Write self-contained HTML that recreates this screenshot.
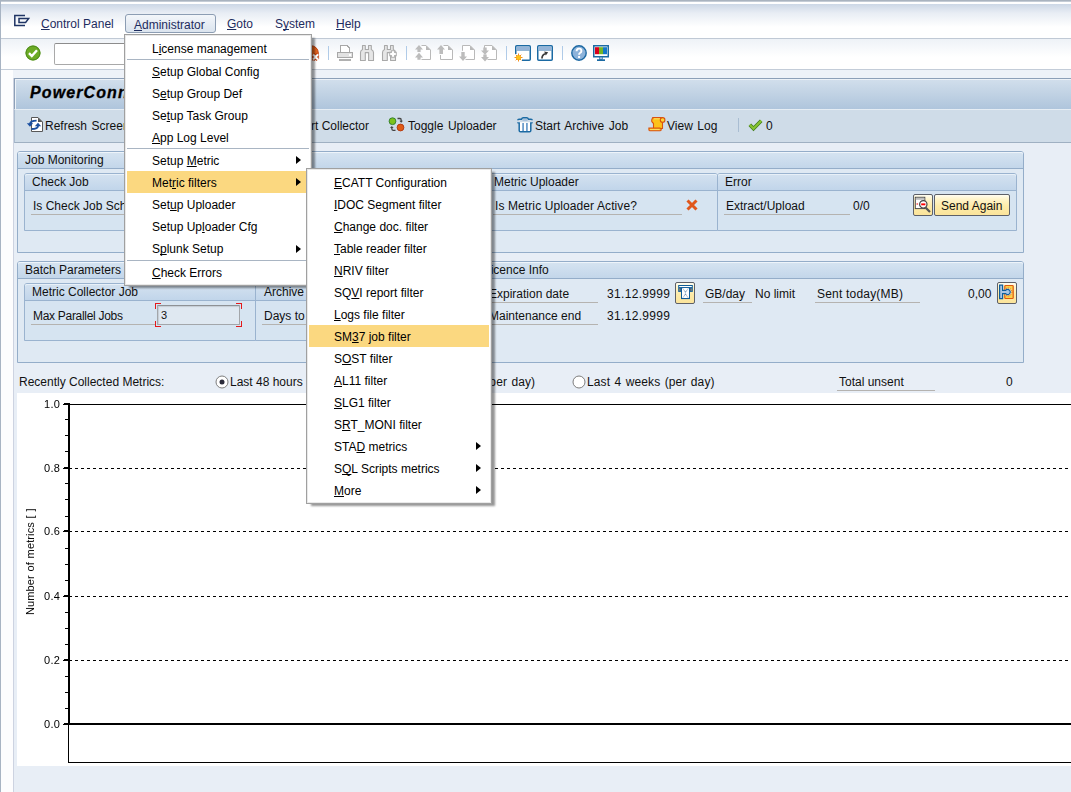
<!DOCTYPE html>
<html><head><meta charset="utf-8">
<style>
*{box-sizing:border-box;margin:0;padding:0}
html,body{width:1071px;height:792px;overflow:hidden}
body{position:relative;background:#e8eef6;font-family:"Liberation Sans",sans-serif;font-size:12px;color:#000}
.a{position:absolute}
.t{position:absolute;white-space:pre;line-height:14px;color:#111}
u{text-decoration:underline;text-underline-offset:1px;text-decoration-thickness:1px;text-decoration-skip-ink:none}
svg{position:absolute;overflow:visible}
/* frame */
#topline{left:0;top:0;width:1071px;height:1px;background:#a9b3bf}
#menubar{left:1px;top:1px;width:1070px;height:37px;background:linear-gradient(#c4ccd6 0,#c4ccd6 1px,#ffffff 1px,#ffffff 3px,#ccd7e6 3px,#e8edf4 12px,#ffffff 26px)}
#mbline{left:1px;top:38px;width:1070px;height:1px;background:#c0c9d5}
#toolbar{left:1px;top:39px;width:1070px;height:30px;background:linear-gradient(#eef2f7,#ffffff 60%)}
#tbline{left:1px;top:69px;width:1070px;height:1px;background:#c3ccd8}
#strip{left:1px;top:70px;width:1070px;height:8px;background:#eef2f8}
#leftline{left:0;top:0;width:1px;height:792px;background:#a8b4c3}
#leftstrip{left:1px;top:70px;width:12px;height:722px;background:#fdfdfe}
#panel{left:13px;top:78px;width:1058px;height:714px;background:#e8eef6;border-left:1px solid #cdd3e1}
#title{left:14px;top:78px;width:1057px;height:31px;border-top:1px solid #8da0b8;border-left:1px solid #8da0b8;background:linear-gradient(#d2dfec,#afc5dc);box-shadow:inset 1px 1px 0 #edf2f8}
#apptb{left:14px;top:109px;width:1057px;height:34px;background:#cfdce8;border-top:1px solid #e6edf4;border-bottom:1px solid #9fb0c2;border-left:1px solid #a9bbcf}
.menutxt{color:#1e2c5e}
/* group boxes */
.gb{position:absolute;border:1px solid #94adc9;border-radius:3px 3px 0 0;background:#dfe9f3}
.gb>.h{position:absolute;left:0;top:0;right:0;height:17px;border-bottom:1px solid #94adc9;border-radius:2px 2px 0 0;background:linear-gradient(#d6e4f1,#c3d6ea);box-shadow:inset 0 1px 0 #eef4fa}
.ib{position:absolute;border:1px solid #9ab3cf;border-radius:3px 3px 0 0;background:#d6e4f1}
.ib>.h{position:absolute;left:0;top:0;right:0;height:17px;border-bottom:1px solid #9ab3cf;border-radius:2px 2px 0 0;background:linear-gradient(#d4e2f0,#c1d5ea);box-shadow:inset 0 1px 0 #e8f0f8}
.ul{position:absolute;height:1px;background:#b5b3b0}
.btn{position:absolute;border:1px solid #5d6068;border-radius:2px;background:linear-gradient(#fffdf2 0,#fff5cc 20%,#fdeba9 55%,#fbe49b 100%)}
/* menus */
.menu{position:absolute;background:#fff;border:1px solid #a0a0a0;box-shadow:inset 0 0 0 1px #e9e9e9,4px 3px 2px -1px rgba(0,0,0,.42)}
.mi{position:absolute;white-space:pre;line-height:14px;color:#000}
.sep{position:absolute;height:1px;background:#a9b5c3}
.hl{position:absolute;background:#fbd880;height:22px}
.arr{position:absolute;width:0;height:0;border-top:4.5px solid transparent;border-bottom:4.5px solid transparent;border-left:5px solid #000}
</style></head><body>
<div class="a" id="topline"></div>
<div class="a" id="menubar"></div>
<div class="a" id="mbline"></div>
<div class="a" id="toolbar"></div>
<div class="a" id="tbline"></div>
<div class="a" id="strip"></div>
<div class="a" id="leftstrip"></div>
<div class="a" id="panel"></div>
<div class="a" id="title"></div>
<div class="a" id="apptb"></div>
<div class="a" id="leftline"></div>

<!-- menubar items -->
<svg style="left:13px;top:14px" width="17" height="13" viewBox="0 0 17 13"><path d="M12 1.6H1.8V11.4H12M6 4.6H15.6L12.6 8.4H6Z" fill="none" stroke="#1f3464" stroke-width="1.5"/></svg>
<div class="t menutxt" style="left:41px;top:17px"><u>C</u>ontrol Panel</div>
<div class="a" style="left:125px;top:14px;width:91px;height:19px;border:1px solid #8c9db3;border-radius:3px;background:linear-gradient(#f3f6fa,#dbe4ee)"></div>
<div class="t menutxt" style="left:134px;top:18px"><u>A</u>dministrator</div>
<div class="t menutxt" style="left:227px;top:17px"><u>G</u>oto</div>
<div class="t menutxt" style="left:275px;top:17px">S<u>y</u>stem</div>
<div class="t menutxt" style="left:336px;top:17px"><u>H</u>elp</div>

<!-- system toolbar -->
<svg style="left:25px;top:45px" width="16" height="16" viewBox="0 0 16 16"><circle cx="8" cy="8" r="7.5" fill="#6cab25"/><circle cx="8" cy="8" r="7" fill="none" stroke="#4d8a1c" stroke-width="1"/><path d="M4 8.2L6.8 11L12 5.2" fill="none" stroke="#fff" stroke-width="2.4"/></svg>
<div class="a" style="left:54px;top:43px;width:246px;height:22px;border:1px solid #a9a9a9;border-top-color:#8c8c8c;border-radius:2px;background:#fff"></div>
<svg style="left:303px;top:45px" width="17" height="17" viewBox="0 0 17 17"><circle cx="8" cy="8" r="7.3" fill="#e2641e" stroke="#c0400f" stroke-width="1"/><path d="M10 9.5L15 14.5M15 9.5L10 14.5" stroke="#c0400f" stroke-width="4"/><path d="M10 9.5L15 14.5M15 9.5L10 14.5" stroke="#fff" stroke-width="2"/></svg>
<div class="a" style="left:328px;top:46px;width:1px;height:14px;background:#b0cbe8"></div>
<svg style="left:337px;top:45px" width="16" height="16" viewBox="0 0 16 16" shape-rendering="crispEdges"><path d="M3.5 7V0.5H10L12.5 3V7" fill="#fff" stroke="#a8a8a8"/><rect x="0.5" y="7.5" width="15" height="5" rx="1" fill="#e2e2e2" stroke="#a8a8a8"/><rect x="12" y="9" width="2" height="2" fill="#fff"/><rect x="2" y="14" width="12" height="1.5" fill="#b0b0b0"/></svg>
<svg style="left:360px;top:45px" width="15" height="16" viewBox="0 0 15 16"><path d="M2.5 0.5H5.3V4.5H8.5V0.5H11.3V4.5Q13.5 5.5 13.5 7.5V15.5H8.6V7.6H5.3V15.5H0.5V7.5Q0.5 5.5 2.5 4.5Z" fill="#e6e6e6" stroke="#a9a9a9" stroke-width="1.1" stroke-linejoin="round"/></svg>
<svg style="left:382px;top:45px" width="17" height="16" viewBox="0 0 17 16"><path d="M2.5 0.5H5.3V4.5H8.5V0.5H11.3V4.5Q13.5 5.5 13.5 7.5V15.5H8.6V7.6H5.3V15.5H0.5V7.5Q0.5 5.5 2.5 4.5Z" fill="#e6e6e6" stroke="#a9a9a9" stroke-width="1.1" stroke-linejoin="round"/><path d="M11 5.2V12.8M7.2 9H14.8" stroke="#b0b0b0" stroke-width="4.4"/><path d="M11 6.2V11.8M8.2 9H13.8" stroke="#fff" stroke-width="2.2"/></svg>
<div class="a" style="left:406px;top:46px;width:1px;height:14px;background:#b0cbe8"></div>
<svg style="left:415px;top:45px" width="17" height="16" viewBox="0 0 17 16"><path d="M6.5 0.5H11L15.5 5V14.5H6.5" fill="#fff" stroke="#b9b9b9"/><path d="M11 0.5L15.5 5H11Z" fill="#b9b9b9"/><path d="M4 0L8 4.6H5.6V7H2.4V4.6H0Z M4 7.8L8 12.4H5.6V14.7H2.4V12.4H0Z" fill="#bcbcbc"/></svg>
<svg style="left:437px;top:45px" width="17" height="16" viewBox="0 0 17 16"><path d="M6.5 0.5H11L15.5 5V14.5H3.5V10" fill="#fff" stroke="#b9b9b9"/><path d="M11 0.5L15.5 5H11Z" fill="#b9b9b9"/><path d="M4 0L8 4.6H6V9H2.4V4.6H0Z" fill="#bcbcbc"/></svg>
<svg style="left:459px;top:45px" width="17" height="17" viewBox="0 0 17 17"><path d="M3.5 5.8V0.5H11L15.5 5V14.5H6.5" fill="#fff" stroke="#b9b9b9"/><path d="M11 0.5L15.5 5H11Z" fill="#b9b9b9"/><path d="M4 16L8 11.5H5.7V7H2.3V11.5H0Z" fill="#bcbcbc"/></svg>
<svg style="left:481px;top:45px" width="17" height="17" viewBox="0 0 17 17"><path d="M3.5 3V0.5H11L15.5 5V14.5H6.5" fill="#fff" stroke="#b9b9b9"/><path d="M11 0.5L15.5 5H11Z" fill="#b9b9b9"/><path d="M4 9.8L8 5.4H5.7V2.5H2.3V5.4H0Z M4 16.5L8 12.1H5.7V9.6H2.3V12.1H0Z" fill="#bcbcbc"/></svg>
<div class="a" style="left:506px;top:46px;width:1px;height:14px;background:#b0cbe8"></div>
<svg style="left:515px;top:45px" width="16" height="16" viewBox="0 0 16 16"><rect x="0.75" y="0.75" width="14.5" height="14.5" rx="1" fill="#fff" stroke="#1b6aa3" stroke-width="1.5"/><rect x="1.5" y="1.5" width="13" height="3.5" fill="#94b4d8"/><rect x="1.5" y="5" width="13" height="0.6" fill="#4f86b8"/><rect x="0" y="9" width="7" height="7" fill="#fff"/><circle cx="3.5" cy="12.5" r="2.6" fill="#f7b218"/><path d="M3.5 8.5V16.5M-0.5 12.5H7.5M0.7 9.7L6.3 15.3M6.3 9.7L0.7 15.3" stroke="#f58f1a" stroke-width="1"/><circle cx="3.5" cy="12.5" r="2" fill="#fcc419"/></svg>
<svg style="left:537px;top:45px" width="16" height="16" viewBox="0 0 16 16"><rect x="0.75" y="0.75" width="14.5" height="14.5" rx="1" fill="#fff" stroke="#1b6aa3" stroke-width="1.5"/><rect x="1.5" y="1.5" width="13" height="3.5" fill="#94b4d8"/><rect x="1.5" y="5" width="13" height="0.6" fill="#4f86b8"/><path d="M5 13.5Q4.8 10 8.5 8.8" fill="none" stroke="#3a3a3a" stroke-width="1.7"/><path d="M7.2 6.6L11.2 7.2L8.8 10.6Z" fill="#3a3a3a"/></svg>
<div class="a" style="left:562px;top:46px;width:1px;height:14px;background:#b0cbe8"></div>
<svg style="left:571px;top:45px" width="16" height="16" viewBox="0 0 16 16"><circle cx="8" cy="8" r="7.2" fill="#8db3da" stroke="#1d69a3" stroke-width="1.4"/><path d="M5.6 6.2Q5.6 3.6 8 3.6Q10.4 3.6 10.4 5.9Q10.4 7.2 9 8Q8.1 8.5 8.1 9.8" fill="none" stroke="#fff" stroke-width="1.9"/><rect x="7.1" y="11" width="2" height="2" fill="#fff"/></svg>
<svg style="left:593px;top:45px" width="16" height="16" viewBox="0 0 16 16"><rect x="0.75" y="0.75" width="14.5" height="11" fill="#fff" stroke="#1b6aa3" stroke-width="1.5"/><rect x="2" y="2.2" width="4" height="7" fill="#d9001b"/><rect x="6" y="2.2" width="4" height="7" fill="#73b626"/><rect x="10" y="2.2" width="4" height="7" fill="#1478c8"/><rect x="6.6" y="12" width="2.8" height="2.5" fill="#9fc0e0" stroke="#1b6aa3" stroke-width="0.6"/><rect x="4" y="14.3" width="8" height="1.7" fill="#1b6aa3"/></svg>

<!-- title -->
<div class="t" style="left:30px;top:84px;font-size:16px;font-weight:bold;font-style:italic;line-height:18px;color:#000;letter-spacing:1.1px;-webkit-text-stroke:0.3px #000">PowerConnect</div>

<!-- app toolbar -->
<svg style="left:27px;top:117px" width="17" height="16" viewBox="0 0 17 16"><path d="M4.5 0.5H11L15.5 5V14.5H4.5Z" fill="#fff" stroke="#585858" stroke-width="1"/><path d="M11 0.5L15.5 5H11Z" fill="#585858"/><path d="M3 7Q3.2 3.6 9.6 3.6" fill="none" stroke="#1a4fa0" stroke-width="1.9"/><path d="M-0.2 6.2H6.2L3 9.8Z" fill="#1a4fa0"/><path d="M11 9Q10.8 12 4.5 12" fill="none" stroke="#1a4fa0" stroke-width="1.9"/><path d="M7.8 9.2H14.2L11 5.8Z" fill="#1a4fa0"/></svg>
<div class="t" style="left:45px;top:119px;word-spacing:1.2px">Refresh Screen</div>
<div class="t" style="left:293px;top:119px">Start Collector</div>
<svg style="left:388px;top:117px" width="17" height="15" viewBox="0 0 17 15"><circle cx="4.5" cy="4.2" r="3.4" fill="#7cc21d" stroke="#2f7a2f" stroke-width="0.9"/><circle cx="12.5" cy="10.5" r="3.4" fill="#e05a14" stroke="#b0360f" stroke-width="0.9"/><path d="M9.5 1.5H12Q13.2 1.5 13.2 3.2V4.5" fill="none" stroke="#444" stroke-width="1.3"/><path d="M11.4 3.8L13.2 5.8L15 3.8Z" fill="#444"/><path d="M7.5 13.3H5Q3.8 13.3 3.8 11.6V10.3" fill="none" stroke="#444" stroke-width="1.3"/><path d="M2 11L3.8 9L5.6 11Z" fill="#444"/></svg>
<div class="t" style="left:408px;top:119px;word-spacing:1.2px">Toggle Uploader</div>
<svg style="left:517px;top:117px" width="16" height="16" viewBox="0 0 16 16"><path d="M0.8 3.2Q0.8 2.2 2 2.2H4.5Q5 0.8 6.3 0.8H9.7Q11 0.8 11.5 2.2H14Q15.2 2.2 15.2 3.2" fill="none" stroke="#1b6aa3" stroke-width="1.5"/><path d="M5.5 2.5H10.5V3.5H5.5Z" fill="#7fa9d2"/><path d="M0.8 5.2Q0.8 6 2.2 6V13.5Q2.2 14.8 3.5 14.8H12.5Q13.8 14.8 13.8 13.5V6Q15.2 6 15.2 5.2" fill="#fff" stroke="#1b6aa3" stroke-width="1.5"/><rect x="5.2" y="6" width="1.8" height="8" fill="#6f9fcc"/><rect x="9" y="6" width="1.8" height="8" fill="#6f9fcc"/></svg>
<div class="t" style="left:535px;top:119px;word-spacing:1.2px">Start Archive Job</div>
<svg style="left:648px;top:117px" width="18" height="15" viewBox="0 0 18 15"><path d="M4.6 0.6H14.5V11.5H5.5V6.5L4.2 5.2Q3.4 4 3.8 2.8Z" fill="#fcc21b" stroke="#d9520f" stroke-width="1.1" stroke-linejoin="round"/><path d="M6 1.8H13" stroke="#fde36a" stroke-width="1"/><circle cx="14.6" cy="2.9" r="2.3" fill="#fdd835" stroke="#d9520f" stroke-width="1.1"/><path d="M0.9 11.1H11.8Q13.2 11.1 13.2 12.4Q13.2 13.8 11.8 13.8H2.2Q0.9 13.8 0.9 12.4Z" fill="#fcc21b" stroke="#d9520f" stroke-width="1.1"/><path d="M2 12.4H11.5" stroke="#fde36a" stroke-width="0.9"/></svg>
<div class="t" style="left:667px;top:119px;word-spacing:1.2px">View Log</div>
<div class="a" style="left:738px;top:118px;width:1px;height:14px;background:#a9bdd2"></div>
<svg style="left:748px;top:119px" width="15" height="12" viewBox="0 0 15 12"><path d="M1.8 5.8L5.5 9.6L13.2 1.8" fill="none" stroke="#3f7a1a" stroke-width="3.6"/><path d="M1.8 5.8L5.5 9.6L13.2 1.8" fill="none" stroke="#86c232" stroke-width="2.2"/></svg>
<div class="t" style="left:766px;top:119px">0</div>

<!-- Job Monitoring -->
<div class="gb" style="left:17px;top:151px;width:1007px;height:102px"><div class="h"></div></div>
<div class="t" style="left:25px;top:153px">Job Monitoring</div>
<div class="ib" style="left:24px;top:173px;width:463px;height:58px"><div class="h"></div></div>
<div class="ib" style="left:486px;top:173px;width:232px;height:58px"><div class="h"></div></div>
<div class="ib" style="left:717px;top:173px;width:300px;height:58px"><div class="h"></div></div>
<div class="t" style="left:32px;top:175px">Check Job</div>
<div class="t" style="left:494px;top:175px">Metric Uploader</div>
<div class="t" style="left:725px;top:175px">Error</div>
<div class="t" style="left:33px;top:199px">Is Check Job Scheduled?</div>
<div class="ul" style="left:31px;top:214px;width:250px"></div>
<div class="t" style="left:495px;top:199px;letter-spacing:0.1px">Is Metric Uploader Active?</div>
<div class="ul" style="left:493px;top:214px;width:189px"></div>
<div class="t" style="left:726px;top:199px">Extract/Upload</div>
<div class="ul" style="left:724px;top:214px;width:126px"></div>
<div class="t" style="left:853px;top:199px">0/0</div>
<div class="btn" style="left:913px;top:194px;width:20px;height:22px"></div>
<svg style="left:913px;top:194px" width="20" height="22" viewBox="0 0 20 22"><rect x="2.3" y="3.3" width="9.5" height="11.3" fill="#fff" stroke="#4a4a4a" stroke-width="1"/><rect x="2.8" y="3.8" width="8.5" height="2" fill="#bdbdbd"/><rect x="3.5" y="9.5" width="1.6" height="1" fill="#e00"/><path d="M12.5 13.5L17 18" stroke="#555" stroke-width="2.2"/><circle cx="10.3" cy="10.3" r="3.7" fill="#fff" stroke="#444" stroke-width="1.2"/><rect x="8.2" y="9.4" width="4.2" height="1.9" fill="#f00"/></svg>
<div class="btn" style="left:934px;top:194px;width:76px;height:22px"></div>
<div class="t" style="left:941px;top:199px">Send Again</div>

<!-- Batch Parameters -->
<div class="gb" style="left:17px;top:261px;width:460px;height:102px"><div class="h"></div></div>
<div class="gb" style="left:476px;top:261px;width:548px;height:102px"><div class="h"></div></div>
<div class="t" style="left:25px;top:263px">Batch Parameters</div>
<div class="t" style="left:484px;top:263px">Licence Info</div>
<div class="ib" style="left:24px;top:283px;width:232px;height:58px"><div class="h"></div></div>
<div class="ib" style="left:255px;top:283px;width:215px;height:58px"><div class="h"></div></div>
<div class="t" style="left:32px;top:285px">Metric Collector Job</div>
<div class="t" style="left:264px;top:285px">Archive Job</div>
<div class="t" style="left:33px;top:309px;letter-spacing:-0.3px">Max Parallel Jobs</div>
<div class="ul" style="left:31px;top:324px;width:125px"></div>
<div class="t" style="left:264px;top:309px">Days to keep</div>
<div class="ul" style="left:262px;top:324px;width:120px"></div>
<div class="a" style="left:157px;top:305px;width:83px;height:20px;border:1px solid #a3a6aa;border-top-color:#8e9195;border-radius:1px;background:#dfe8f1;box-shadow:inset 1px 1px 1px rgba(0,0,0,.12)"></div>
<svg style="left:155px;top:303px" width="88" height="24" shape-rendering="crispEdges"><path d="M0 0h6v1h-5v5h-1z M81 0h6v6h-1v-5h-5z M0 18h1v5h5v1h-6z M86 18h1v6h-6v-1h5z" fill="#e3191b"/></svg>
<div class="t" style="left:161px;top:308px;font-size:11px">3</div>
<svg style="left:686px;top:199px" width="12" height="12" viewBox="0 0 12 12"><path d="M1.5 1.5L10.5 10.5M10.5 1.5L1.5 10.5" stroke="#e0561b" stroke-width="3"/></svg>
<div class="t" style="left:489px;top:287px">Expiration date</div>
<div class="ul" style="left:487px;top:302px;width:111px"></div>
<div class="t" style="left:607px;top:287px;letter-spacing:0.33px">31.12.9999</div>
<div class="btn" style="left:675px;top:282px;width:20px;height:22px"></div>
<svg style="left:675px;top:282px" width="20" height="22" viewBox="0 0 20 22"><rect x="3.2" y="3" width="14.6" height="6.9" fill="#0f5c98"/><rect x="4.2" y="4" width="12.6" height="1.1" fill="#fff"/><rect x="4.2" y="6.4" width="1.2" height="2.4" fill="#a08672"/><rect x="15.6" y="6.4" width="1.2" height="2.4" fill="#a08672"/><rect x="6" y="5.5" width="9" height="11.6" fill="#0f5c98"/><rect x="7" y="6" width="7" height="10" fill="#fff"/><path d="M7.8 6.5L10.4 10V12.2L8 15.5M13.2 6.5L10.6 10M10.6 12.2L13 15.5" fill="none" stroke="#2b5f8f" stroke-width="0.7" stroke-dasharray="1 0.6"/></svg>
<div class="t" style="left:705px;top:287px">GB/day</div>
<div class="ul" style="left:703px;top:302px;width:49px"></div>
<div class="t" style="left:755px;top:287px">No limit</div>
<div class="t" style="left:817px;top:287px;letter-spacing:0.2px">Sent today(MB)</div>
<div class="ul" style="left:815px;top:302px;width:105px"></div>
<div class="t" style="left:968px;top:287px">0,00</div>
<div class="btn" style="left:997px;top:282px;width:20px;height:22px"></div>
<svg style="left:997px;top:282px" width="20" height="22" viewBox="0 0 20 22"><rect x="7.8" y="3.5" width="8.4" height="13" rx="0.8" fill="#fbd24a" stroke="#de5a12" stroke-width="1.2"/><circle cx="11" cy="10" r="3.9" fill="#fff1b8" stroke="#de5a12" stroke-width="1" stroke-dasharray="1.3 0.9"/><path d="M2.6 3.2H5.6V8.4H8.6A2.6 2.6 0 1 1 8.6 11.6H5.6V16.6H2.6Z" fill="#a9c6e4" stroke="#0f5f9e" stroke-width="1.2"/></svg>
<div class="t" style="left:489px;top:309px">Maintenance end</div>
<div class="ul" style="left:487px;top:324px;width:111px"></div>
<div class="t" style="left:607px;top:309px;letter-spacing:0.33px">31.12.9999</div>

<!-- radio row -->
<div class="t" style="left:19px;top:375px">Recently Collected Metrics:</div>
<div class="t" style="left:230px;top:375px">Last 48 hours</div>
<div class="t" style="left:407.6px;top:375px;word-spacing:1px;letter-spacing:0.1px">Last 2 weeks (per day)</div>
<div class="t" style="left:587px;top:375px;word-spacing:1px;letter-spacing:0.1px">Last 4 weeks (per day)</div>
<div class="t" style="left:839px;top:375px">Total unsent</div>
<div class="ul" style="left:837px;top:390px;width:98px"></div>
<div class="t" style="left:1006px;top:375px">0</div>
<svg style="left:214.5px;top:375px" width="14" height="14" viewBox="0 0 14 14"><circle cx="7" cy="7" r="6" fill="#fff" stroke="#7d7d7d" stroke-width="1"/><circle cx="7" cy="7" r="2.5" fill="#2a2a3a"/></svg>
<svg style="left:398px;top:375px" width="14" height="14" viewBox="0 0 14 14"><circle cx="7" cy="7" r="6" fill="#fff" stroke="#7d7d7d" stroke-width="1"/></svg>
<svg style="left:571.5px;top:375px" width="14" height="14" viewBox="0 0 14 14"><circle cx="7" cy="7" r="6" fill="#fff" stroke="#7d7d7d" stroke-width="1"/></svg>

<!-- chart -->
<div class="a" style="left:17px;top:393px;width:1054px;height:373px;background:#fff"></div>
<svg style="left:0;top:0" width="1071" height="792" shape-rendering="crispEdges">
<rect x="70" y="404" width="1001" height="1" fill="#000"/>
<rect x="68" y="403" width="2" height="322" fill="#000"/>
<rect x="68" y="404" width="1" height="359" fill="#000"/>
<rect x="68" y="762" width="1003" height="1" fill="#000"/>
<rect x="68" y="723" width="1003" height="2" fill="#000"/>
<path d="M64 403h4v2h-4zM63 404h1v1h-1z M64 467h4v2h-4zM63 468h1v1h-1z M64 530h4v2h-4zM63 531h1v1h-1z M64 595h4v2h-4zM63 596h1v1h-1z M64 659h4v2h-4zM63 660h1v1h-1z M64 723h4v2h-4zM63 724h1v1h-1z" fill="#000"/>
<path d="M65 419h3v1h-3z M65 435h3v1h-3z M65 451h3v1h-3z M65 483h3v1h-3z M65 499h3v1h-3z M65 516h3v1h-3z M65 548h3v1h-3z M65 564h3v1h-3z M65 580h3v1h-3z M65 612h3v1h-3z M65 628h3v1h-3z M65 644h3v1h-3z M65 676h3v1h-3z M65 692h3v1h-3z M65 708h3v1h-3z" fill="#000"/>
</svg>
<div class="a" style="left:69px;top:468px;width:1002px;height:1px;background:repeating-linear-gradient(90deg,#000 0 3px,transparent 3px 6px)"></div>
<div class="a" style="left:69px;top:531px;width:1002px;height:1px;background:repeating-linear-gradient(90deg,#000 0 3px,transparent 3px 6px)"></div>
<div class="a" style="left:69px;top:596px;width:1002px;height:1px;background:repeating-linear-gradient(90deg,#000 0 3px,transparent 3px 6px)"></div>
<div class="a" style="left:69px;top:660px;width:1002px;height:1px;background:repeating-linear-gradient(90deg,#000 0 3px,transparent 3px 6px)"></div>
<div class="t" style="left:30px;top:398px;width:30.3px;text-align:right;font-size:11px;line-height:12px;color:#000;will-change:transform;letter-spacing:0.3px">1.0</div>
<div class="t" style="left:30px;top:462px;width:30.3px;text-align:right;font-size:11px;line-height:12px;color:#000;will-change:transform;letter-spacing:0.3px">0.8</div>
<div class="t" style="left:30px;top:525px;width:30.3px;text-align:right;font-size:11px;line-height:12px;color:#000;will-change:transform;letter-spacing:0.3px">0.6</div>
<div class="t" style="left:30px;top:590px;width:30.3px;text-align:right;font-size:11px;line-height:12px;color:#000;will-change:transform;letter-spacing:0.3px">0.4</div>
<div class="t" style="left:30px;top:654px;width:30.3px;text-align:right;font-size:11px;line-height:12px;color:#000;will-change:transform;letter-spacing:0.3px">0.2</div>
<div class="t" style="left:30px;top:718px;width:30.3px;text-align:right;font-size:11px;line-height:12px;color:#000;will-change:transform;letter-spacing:0.3px">0.0</div>
<div class="t" style="left:-22.5px;top:557px;width:104px;text-align:center;font-size:11px;line-height:12px;color:#000;transform:rotate(-90deg);letter-spacing:0.12px;word-spacing:0.5px">Number of metrics [ ]</div>

<!-- menus -->
<div class="menu" style="left:124px;top:34px;width:188px;height:252px"></div>
<div class="sep" style="left:127px;top:59px;width:182px"></div>
<div class="sep" style="left:127px;top:148px;width:182px"></div>
<div class="sep" style="left:127px;top:260px;width:182px"></div>
<div class="hl" style="left:127px;top:171px;width:182px"></div>
<div class="mi" style="left:152px;top:42px">L<u>i</u>cense management</div>
<div class="mi" style="left:152px;top:65px"><u>S</u>etup Global Config</div>
<div class="mi" style="left:152px;top:87px">S<u>e</u>tup Group Def</div>
<div class="mi" style="left:152px;top:109px">Se<u>t</u>up Task Group</div>
<div class="mi" style="left:152px;top:131px"><u>A</u>pp Log Level</div>
<div class="mi" style="left:152px;top:154px">Setup <u>M</u>etric</div>
<div class="arr" style="left:296px;top:156px"></div>
<div class="mi" style="left:152px;top:176px">Met<u>r</u>ic filters</div>
<div class="arr" style="left:296px;top:178px"></div>
<div class="mi" style="left:152px;top:198px">Set<u>u</u>p Uploader</div>
<div class="mi" style="left:152px;top:220px">Setup Up<u>l</u>oader Cfg</div>
<div class="mi" style="left:152px;top:242px">S<u>p</u>lunk Setup</div>
<div class="arr" style="left:296px;top:245px"></div>
<div class="mi" style="left:152px;top:266px"><u>C</u>heck Errors</div>

<div class="menu" style="left:306px;top:168px;width:186px;height:336px"></div>
<div class="hl" style="left:309px;top:325px;width:180px"></div>
<div class="mi" style="left:334px;top:176px"><u>E</u>CATT Configuration</div>
<div class="mi" style="left:334px;top:198px"><u>I</u>DOC Segment filter</div>
<div class="mi" style="left:334px;top:220px"><u>C</u>hange doc. filter</div>
<div class="mi" style="left:334px;top:242px"><u>T</u>able reader filter</div>
<div class="mi" style="left:334px;top:264px"><u>N</u>RIV filter</div>
<div class="mi" style="left:334px;top:286px">SQ<u>V</u>I report filter</div>
<div class="mi" style="left:334px;top:308px"><u>L</u>ogs file filter</div>
<div class="mi" style="left:334px;top:330px">SM<u>3</u>7 job filter</div>
<div class="mi" style="left:334px;top:352px">S<u>O</u>ST filter</div>
<div class="mi" style="left:334px;top:374px"><u>A</u>L11 filter</div>
<div class="mi" style="left:334px;top:396px"><u>S</u>LG1 filter</div>
<div class="mi" style="left:334px;top:418px">S<u>R</u>T_MONI filter</div>
<div class="mi" style="left:334px;top:440px">STA<u>D</u> metrics</div>
<div class="arr" style="left:476px;top:442px"></div>
<div class="mi" style="left:334px;top:462px">S<u>Q</u>L Scripts metrics</div>
<div class="arr" style="left:476px;top:464px"></div>
<div class="mi" style="left:334px;top:484px"><u>M</u>ore</div>
<div class="arr" style="left:476px;top:486px"></div>

</body></html>
